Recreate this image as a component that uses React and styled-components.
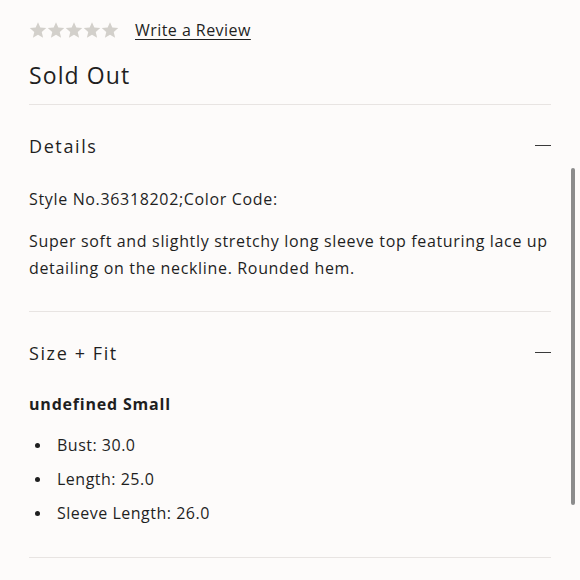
import React from 'react';
import styled, { createGlobalStyle } from 'styled-components';

const GlobalStyle = createGlobalStyle`
	html, body {
		margin: 0;
		padding: 0;
		background: #fdfbfa;
	}
	body {
		font-family: 'Open Sans', 'Liberation Sans', sans-serif;
		color: #1f1f1f;
	}
`;

// Styled Components
const StyledPage = styled.main`
	position: relative;
	width: 580px;
	height: 580px;
	box-sizing: border-box;
	padding: 16px 29px 0;
	overflow: hidden;
`;

const StyledScrollThumb = styled.div`
	position: absolute;
	right: 5px;
	top: 168px;
	width: 4px;
	height: 337px;
	border-radius: 2px;
	background: #8c8c8c;
`;

const StyledRatingRow = styled.div`
	display: flex;
	align-items: center;
	gap: 16px;
	height: 28px;
`;

const StyledStars = styled.div`
	display: flex;
`;

const StyledReviewLink = styled.a`
	font-size: 16px;
	letter-spacing: 0.45px;
	color: #1f1f1f;
	text-decoration: underline;
	text-underline-offset: 3px;
	text-decoration-thickness: 1px;
`;

const StyledStatus = styled.h2`
	margin: 16px 0 0;
	font-size: 23px;
	font-weight: 400;
	letter-spacing: 1.1px;
	line-height: 30px;
	padding-bottom: 14px;
	border-bottom: 1px solid #e8e4e2;
`;

const StyledSection = styled.section`
	border-bottom: 1px solid #e8e4e2;
`;

const StyledSectionHeader = styled.div`
	display: flex;
	align-items: center;
	justify-content: space-between;
	height: 81px;
`;

const StyledSectionTitle = styled.h3`
	margin: 0;
	font-size: 18px;
	font-weight: 400;
	letter-spacing: 1.6px;
`;

const StyledMinus = styled.span`
	width: 16px;
	height: 1px;
	background: #3a3a3a;
`;

const StyledBody = styled.div`
	padding-bottom: ${(p) => p.$pad}px;
`;

const StyledText = styled.p`
	margin: 0 0 ${(p) => p.$gap || 0}px;
	font-size: 16px;
	line-height: 27px;
	letter-spacing: 0.66px;
`;

const StyledSizeName = styled.p`
	margin: 0 0 18px;
	font-size: 16px;
	font-weight: 700;
	letter-spacing: 0.8px;
	line-height: 22px;
`;

const StyledList = styled.ul`
	margin: 0;
	padding: 0;
	list-style: none;
	display: flex;
	flex-direction: column;
	gap: 10px;
`;

const StyledItem = styled.li`
	display: flex;
	align-items: center;
	gap: 17px;
	padding-left: 6px;
	font-size: 16px;
	line-height: 24px;
	letter-spacing: 0.5px;

	&::before {
		content: '';
		width: 5px;
		height: 5px;
		border-radius: 50%;
		background: #1f1f1f;
	}
`;

const Star = () => (
	<svg width='18' height='18' viewBox='0 0 24 24'>
		<path
			fill='#d3d0cb'
			d='M12 1.5l3.1 7.2 7.9.7-6 5.2 1.8 7.7L12 18.2l-6.8 4.1L7 14.6l-6-5.2 7.9-.7z'
		/>
	</svg>
);

const Section = ({ title, pad, children }) => (
	<StyledSection>
		<StyledSectionHeader>
			<StyledSectionTitle>{title}</StyledSectionTitle>
			<StyledMinus />
		</StyledSectionHeader>
		<StyledBody $pad={pad}>{children}</StyledBody>
	</StyledSection>
);

export default function App() {
	const measures = ['Bust: 30.0', 'Length: 25.0', 'Sleeve Length: 26.0'];

	return (
		<StyledPage>
			<GlobalStyle />
			<StyledRatingRow>
				<StyledStars>
					{[0, 1, 2, 3, 4].map((i) => (
						<Star key={i} />
					))}
				</StyledStars>
				<StyledReviewLink href='#'>Write a Review</StyledReviewLink>
			</StyledRatingRow>

			<StyledStatus>Sold Out</StyledStatus>

			<Section title='Details' pad={29}>
				<StyledText $gap={15}>Style No.36318202;Color Code:</StyledText>
				<StyledText>
					Super soft and slightly stretchy long sleeve top featuring lace up
					detailing on the neckline. Rounded hem.
				</StyledText>
			</Section>

			<Section title='Size + Fit' pad={32}>
				<StyledSizeName>undefined Small</StyledSizeName>
				<StyledList>
					{measures.map((m) => (
						<StyledItem key={m}>{m}</StyledItem>
					))}
				</StyledList>
			</Section>

			<StyledScrollThumb />
		</StyledPage>
	);
}
